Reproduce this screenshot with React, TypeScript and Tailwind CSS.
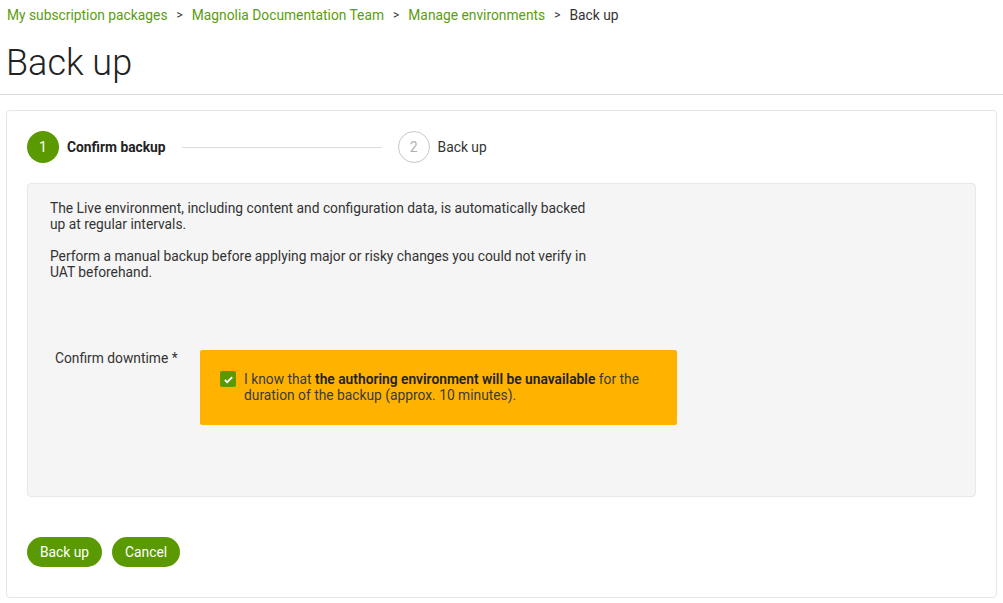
import React from 'react';

const green = 'text-[#5c9c10]';

function Crumbs() {
  const items = ['My subscription packages', 'Magnolia Documentation Team', 'Manage environments'];
  return (
    <nav className="flex items-center h-[30px] pl-[7px] text-[13.8px]">
      {items.map((t) => (
        <React.Fragment key={t}>
          <span className={green}>{t}</span>
          <span className="mx-[9px] text-[#333] text-[12px]">&gt;</span>
        </React.Fragment>
      ))}
      <span className="text-[#333]">Back up</span>
    </nav>
  );
}

function Stepper() {
  return (
    <div className="flex items-center h-[32px]">
      <div className="w-[32px] h-[32px] rounded-full bg-[#5a9a00] text-white flex items-center justify-center text-[14px]">1</div>
      <span className="ml-[8px] text-[13.8px] font-bold text-[#222]">Confirm backup</span>
      <div className="ml-[16px] w-[200px] h-px bg-[#dcdcdc]" />
      <div className="ml-[16px] w-[32px] h-[32px] rounded-full border border-[#c8c8c8] text-[#b0b0b0] flex items-center justify-center text-[14px]">2</div>
      <span className="ml-[8px] text-[13.8px] text-[#333]">Back up</span>
    </div>
  );
}

export default function App() {
  return (
    <div className="w-[1003px] h-[603px] bg-white font-['Roboto',sans-serif] text-[#333] overflow-hidden">
      <Crumbs />
      <h1 className="pl-[6px] h-[65px] pt-[11px] text-[36px] font-light text-[#222] leading-[44px] border-b border-[#dcdcdc]">Back up</h1>
      <div className="mt-[15px] ml-[6px] w-[991px] h-[488px] border border-[#e6e6e6] rounded-[4px] px-[20px] pt-[20px]">
        <Stepper />
        <div className="mt-[20px] h-[314px] bg-[#f5f5f5] border border-[#e8e8e8] rounded-[4px] pl-[22px] pt-[16px]">
          <div className="w-[545px] text-[13.8px] leading-[16px]">
            <p>The Live environment, including content and configuration data, is automatically backed up at regular intervals.</p>
            <p className="mt-[16px]">Perform a manual backup before applying major or risky changes you could not verify in UAT beforehand.</p>
          </div>
          <div className="mt-[70px] flex">
            <span className="ml-[5px] w-[145px] text-[13.8px] leading-[16px]">Confirm downtime *</span>
            <div className="w-[477px] h-[75px] bg-[#ffb300] rounded-[2px] pl-[20px] pt-[21px] flex">
              <div className="w-[16px] h-[16px] bg-[#5a9a00] rounded-[2px] flex items-center justify-center shrink-0">
                <svg width="11" height="11" viewBox="0 0 12 12">
                  <path d="M2 6.3l2.6 2.6L10 3.4" fill="none" stroke="white" strokeWidth="2" />
                </svg>
              </div>
              <p className="ml-[8px] w-[410px] text-[13.8px] leading-[16px] text-[#3a3a3a]">
                I know that <span className="font-semibold text-[#222]">the authoring environment will be unavailable</span> for the duration of the backup (approx. 10 minutes).
              </p>
            </div>
          </div>
        </div>
        <div className="mt-[40px] flex gap-[10px]">
          <button className="h-[30px] px-[13px] rounded-full bg-[#5a9a00] text-white text-[13.8px]">Back up</button>
          <button className="h-[30px] px-[13px] rounded-full bg-[#5a9a00] text-white text-[13.8px]">Cancel</button>
        </div>
      </div>
    </div>
  );
}
